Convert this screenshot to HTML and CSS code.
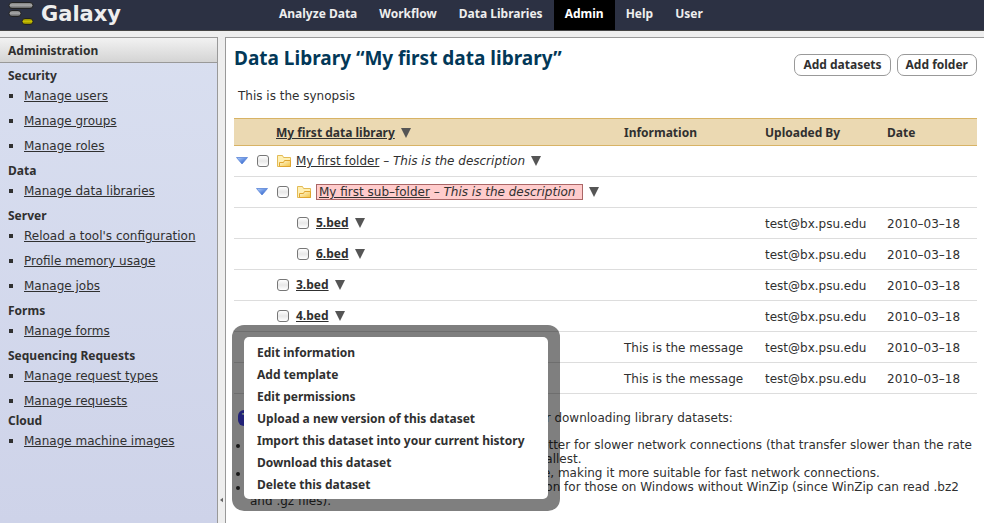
FILE: index.html
```html
<!DOCTYPE html>
<html lang="en">
<head>
<meta charset="utf-8">
<title>Galaxy</title>
<link rel="stylesheet" href="styles.css">
</head>
<body>
<header class="masthead">
  <a class="brand" href="#">
    <svg class="logo" width="26" height="26" viewBox="0 0 26 26" aria-hidden="true">
      <defs>
        <linearGradient id="silver" x1="0" y1="0" x2="0" y2="1"><stop offset="0" stop-color="#777"/><stop offset=".45" stop-color="#aaa"/><stop offset="1" stop-color="#555"/></linearGradient>
        <linearGradient id="gold" x1="0" y1="0" x2="0" y2="1"><stop offset="0" stop-color="#8c8600"/><stop offset=".5" stop-color="#c8c000"/><stop offset="1" stop-color="#777000"/></linearGradient>
      </defs>
      <g stroke="#222" stroke-width="1">
        <rect x="1" y=".5" width="24" height="6" rx="3" fill="url(#silver)"/>
        <rect x="1" y="8.500" width="12" height="6" rx="3" fill="url(#silver)"/>
        <rect x="14" y="16.500" width="11" height="6" rx="3" fill="url(#gold)"/>
      </g>
    </svg>
    <span>Galaxy</span>
  </a>
  <nav class="tabs">
    <a href="#">Analyze Data</a>
    <a href="#">Workflow</a>
    <a href="#">Data Libraries</a>
    <a class="active" href="#">Admin</a>
    <a href="#">Help</a>
    <a href="#">User</a>
  </nav>
</header>
<div class="workspace">
  <aside class="sidebar">
    <h2 class="panel-title">Administration</h2>
    <div class="sections">
      <h3>Security</h3>
      <ul><li><a href="#">Manage users</a></li><li><a href="#">Manage groups</a></li><li><a href="#">Manage roles</a></li></ul>
      <h3>Data</h3>
      <ul><li><a href="#">Manage data libraries</a></li></ul>
      <h3>Server</h3>
      <ul><li><a href="#">Reload a tool's configuration</a></li><li><a href="#">Profile memory usage</a></li><li><a href="#">Manage jobs</a></li></ul>
      <h3>Forms</h3>
      <ul><li><a href="#">Manage forms</a></li></ul>
      <h3>Sequencing Requests</h3>
      <ul class="tight"><li><a href="#">Manage request types</a></li><li><a href="#">Manage requests</a></li></ul>
      <h3>Cloud</h3>
      <ul><li><a href="#">Manage machine images</a></li></ul>
    </div>
  </aside>
  <div class="divider">
    <button type="button" class="collapse" aria-label="Collapse panel"><svg width="4" height="6" viewBox="0 0 4 6" aria-hidden="true"><path d="M4 0v6L0 3z" fill="#666"/></svg></button>
  </div>
  <main class="content">
    <div class="heading">
      <h1>Data Library “My first data library”</h1>
      <div class="actions"><button type="button">Add datasets</button><button type="button">Add folder</button></div>
    </div>
    <p class="synopsis">This is the synopsis</p>
    <svg class="defs" width="0" height="0" aria-hidden="true">
      <defs>
        <linearGradient id="blue" x1="0" y1="0" x2="1" y2="1"><stop offset="0" stop-color="#b4d3ff"/><stop offset="1" stop-color="#174ec4"/></linearGradient>
        <linearGradient id="yellow" x1="0" y1="0" x2="1" y2="1"><stop offset="0" stop-color="#fffbe0"/><stop offset="1" stop-color="#f3c23d"/></linearGradient>
        <symbol id="expand" viewBox="0 0 12 8"><path d="M.5.5h11L6 7z" fill="url(#blue)" stroke="#5a84d6" stroke-width=".8"/></symbol>
        <symbol id="folder" viewBox="0 0 14 12"><path d="M.5 11.500V.5h5l1 2h7v9z" fill="#fff0b4" stroke="#e3bb55"/><path d="M2.500 11.500v-4h4l1-2h6v6z" fill="url(#yellow)" stroke="#dfa530"/></symbol>
        <symbol id="menu" viewBox="0 0 10 10"><path d="M0 0h10L5 10z" fill="#555"/></symbol>
      </defs>
    </svg>
    <table class="library">
      <thead>
        <tr><th class="name"><div class="cell"><a href="#">My first data library</a><svg class="caret"><use href="#menu"/></svg></div></th><th class="info">Information</th><th class="by">Uploaded By</th><th class="date">Date</th></tr>
      </thead>
      <tbody>
        <tr><td><div class="cell level-0"><svg class="expand"><use href="#expand"/></svg><input type="checkbox" aria-label="My first folder"><svg class="folder"><use href="#folder"/></svg><span><a href="#">My first folder</a> – <i>This is the description</i></span><svg class="caret"><use href="#menu"/></svg></div></td><td></td><td></td><td></td></tr>
        <tr><td><div class="cell level-1"><svg class="expand"><use href="#expand"/></svg><input type="checkbox" aria-label="My first sub-folder"><svg class="folder"><use href="#folder"/></svg><span class="marked"><a href="#">My first sub–folder</a> – <i>This is the description</i></span><svg class="caret"><use href="#menu"/></svg></div></td><td></td><td></td><td></td></tr>
        <tr><td><div class="cell file-2"><input type="checkbox" aria-label="5.bed"><a class="file" href="#">5.bed</a><svg class="caret"><use href="#menu"/></svg></div></td><td></td><td>test@bx.psu.edu</td><td>2010–03–18</td></tr>
        <tr><td><div class="cell file-2"><input type="checkbox" aria-label="6.bed"><a class="file" href="#">6.bed</a><svg class="caret"><use href="#menu"/></svg></div></td><td></td><td>test@bx.psu.edu</td><td>2010–03–18</td></tr>
        <tr><td><div class="cell file-1"><input type="checkbox" aria-label="3.bed"><a class="file" href="#">3.bed</a><svg class="caret"><use href="#menu"/></svg></div></td><td></td><td>test@bx.psu.edu</td><td>2010–03–18</td></tr>
        <tr><td><div class="cell file-1"><input type="checkbox" aria-label="4.bed"><a class="file" href="#">4.bed</a><svg class="caret"><use href="#menu"/></svg>
          <div class="popup"><div class="popup-list">
            <a href="#">Edit information</a><a href="#">Add template</a><a href="#">Edit permissions</a><a href="#">Upload a new version of this dataset</a><a href="#">Import this dataset into your current history</a><a href="#">Download this dataset</a><a href="#">Delete this dataset</a>
          </div></div>
        </div></td><td></td><td>test@bx.psu.edu</td><td>2010–03–18</td></tr>
        <tr><td></td><td>This is the message</td><td>test@bx.psu.edu</td><td>2010–03–18</td></tr>
        <tr><td></td><td>This is the message</td><td>test@bx.psu.edu</td><td>2010–03–18</td></tr>
      </tbody>
    </table>
    <p class="tip"><span class="badge">TIP:</span> Several compression options are available for downloading library datasets:</p>
    <ul class="notes">
      <li>bzip2: Compression takes the most time but is better for slower network connections (that transfer slower than the rate of compression) since the resulting file size is smallest.</li>
      <li>gzip: Compression is faster and yields a larger file, making it more suitable for fast network connections.</li>
      <li>ZIP: Not recommended but is provided as an option for those on Windows without WinZip (since WinZip can read .bz2 and .gz files).</li>
    </ul>
  </main>
</div>
</body>
</html>
```
FILE: styles.css
```css
* { box-sizing: border-box; }
body {
  margin: 0;
  min-height: 100vh;
  display: flex;
  flex-direction: column;
  background: #eee;
  color: #303030;
  font: 12px/14px "DejaVu Sans", sans-serif;
}
a { color: inherit; }
h1, h2, h3, p, ul { margin: 0; padding: 0; }
h1, h2, h3, th, .tabs, .file, .popup { font-family: "Noto Sans", sans-serif; }

.masthead {
  display: flex;
  height: 31px;
  background: #2c3143;
  border-bottom: 1px solid #444;
  color: #eee;
}
.masthead a { text-decoration: none; }
.brand {
  display: flex;
  gap: 7px;
  width: 268px;
  padding-left: 8px;
  font: bold 21px/29px "DejaVu Sans", sans-serif;
}
.logo { margin-top: 2px; }
.tabs { display: flex; font-weight: bold; line-height: 28px; }
.tabs a { padding: 0 11px; }
.tabs .active { background: #000; color: #fff; }

.workspace { flex: 1; display: flex; margin-top: 6px; }
.sidebar {
  width: 218px;
  border: solid #999;
  border-width: 1px 1px 0 0;
  background: linear-gradient(#d9dff0, #ced3e9);
}
.panel-title {
  padding: 6px 8px 4px;
  font-size: 12px;
  border-bottom: 1px solid #999;
  background: linear-gradient(#f2f2f2, #d4d4d4);
}
.sections { padding: 3px 8px; }
.sections h3 { font-size: 12px; line-height: 20px; }
.sections ul { list-style: none; padding: 0 0 5px; display: grid; gap: 5px; }
.sections .tight { padding-bottom: 0; }
.sections li { display: flex; align-items: center; gap: 11px; padding-left: 1px; line-height: 20px; }
.sections li::before { content: ""; width: 4px; height: 4px; background: #303030; }

.divider { width: 7px; display: flex; flex-direction: column; justify-content: flex-end; padding-bottom: 20px; }
.collapse { display: flex; border: 0; padding: 0 2px; background: none; }

.content {
  flex: 1;
  border: solid #999;
  border-width: 1px 0 0 1px;
  background: #fff;
  padding: 8px 7px 0 8px;
}
.heading { display: flex; justify-content: space-between; }
h1 { color: #023858; font-size: 19px; line-height: 24px; }
.actions { display: flex; gap: 6px; padding-top: 8px; }
.actions button {
  height: 22px;
  padding: 0 8px;
  border: 1px solid #999;
  border-radius: 7px;
  background: #fff;
  color: #303030;
  font: bold 12px/14px "Noto Sans", sans-serif;
}
.synopsis { padding: 13px 4px 15px; }
.defs { display: block; }

.library { width: 100%; border-collapse: collapse; table-layout: fixed; }
.library th { height: 27px; padding: 2px 0 0; text-align: left; background: #ebd9b2; border: solid #d8b365; border-width: 1px 0; }
.library td { height: 31px; padding: 2px 0 0; border-bottom: 1px solid #ddd; white-space: nowrap; }
.library td:first-child { padding: 0; }
.info { width: 141px; }
.by { width: 122px; }
.date { width: 90px; }
.cell { display: flex; align-items: center; position: relative; }
th .cell { padding-left: 42px; }
.cell .caret { width: 10px; height: 10px; margin-left: 6px; }
.level-0 { padding-left: 2px; }
.level-1 { padding-left: 22px; }
.file-1 { padding-left: 43px; }
.file-2 { padding-left: 63px; }
.expand { width: 12px; height: 8px; margin-right: 9px; }
.folder { width: 14px; height: 12px; margin: 0 5px 0 8px; }
.marked { padding: 0 7px 0 2px; border: 1px solid #aa6666; background: #ffcccc; }
.file { margin-left: 7px; font-weight: bold; }
.cell input {
  appearance: none;
  width: 12px;
  height: 12px;
  margin: 0;
  border: 1px solid #777;
  border-radius: 3px;
  background: linear-gradient(#fff, #e8e8e8 50%, #fff);
}

.popup {
  position: absolute;
  left: -2px;
  top: 16px;
  min-width: 328px;
  padding: 12px;
  border-radius: 12px;
  background: rgba(0, 0, 0, .5);
}
.popup-list { display: grid; padding: 5px 0 3px; border-radius: 5px; background: #fff; }
.popup a { padding: 0 13px; font-weight: bold; line-height: 22px; text-decoration: none; }

.tip { padding: 17px 4px 13px; }
.badge { padding: 1px 4px; border-radius: 6px; background: #44e; color: #fff; font-weight: bold; }
.notes { padding-left: 16px; }
```
